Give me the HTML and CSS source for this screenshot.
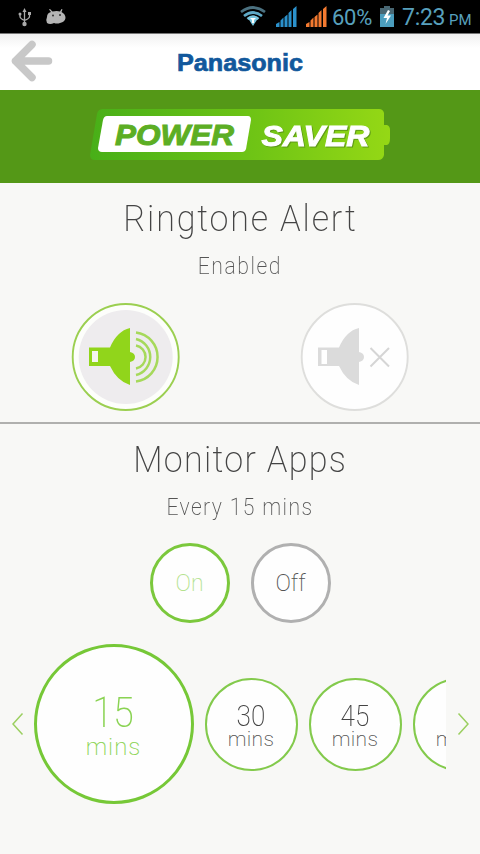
FILE: index.html
```html
<!DOCTYPE html>
<html lang="en">
<head>
<meta charset="utf-8">
<title>Power Saver</title>
<link rel="stylesheet" href="styles.css">
</head>
<body>
<div class="status">
  <svg class="notices" width="70" height="33" viewBox="0 0 70 33">
    <g fill="none" stroke="#aaa" stroke-width="1.3"><path d="M24.500 11V24M20 14V16.500Q20 18.500 24.500 20.500M29.500 13V16.500Q29.500 18.500 24.500 20.500"/></g>
    <g fill="#aaa"><path d="M24.500 8L26.500 12H22.500Z"/><circle cx="24.500" cy="24" r="2.200"/><circle cx="20" cy="14" r="1.500"/><rect x="28" y="12" width="3" height="3"/></g>
    <path d="M47 17Q47 13 51 12L49 9.500L50 9L52.500 11.500Q57 10.500 60 11.500L61.500 9L62.500 9.500L61.500 12Q65.500 14 65.500 18Q65 22 60 23Q57 24 54 23Q50 25 47 23Q45.500 20 47 17Z" fill="#b5b5b5"/>
    <circle cx="53" cy="15.500" r="1" fill="#333"/><circle cx="60" cy="15" r="1" fill="#333"/>
  </svg>
  <svg class="wifi" width="28" height="33" viewBox="0 0 28 33">
    <g fill="none" stroke-width="2.700"><path d="M1 12Q13 3 25 12" stroke="#4b7180"/><path d="M4 16Q13 9 22 16" stroke="#5fa9c6"/><path d="M7.500 19Q13 14.500 18.500 19" stroke="#79c6df"/></g>
    <path d="M8.500 19Q13 16 17.500 19L13 26Z" fill="#79c6df"/><path d="M10 18H16L14 20V23H12V20Z" fill="#fff"/>
  </svg>
  <svg class="signal" width="22" height="33" viewBox="0 0 22 33" fill="#2b91cc"><path d="M0 24L3.500 22V27H0ZM4.500 20.500L7.500 17.500V27H4.500ZM8.500 17L11.500 14.500V27H8.500ZM12.500 13L15.500 10V27H12.500ZM17 9L20.500 6V27H17Z"/></svg>
  <svg class="signal two" width="22" height="33" viewBox="0 0 22 33" fill="#f47a30"><path d="M0 24L3.500 22V27H0ZM4.500 20.500L7.500 17.500V27H4.500ZM8.500 17L11.500 14.500V27H8.500ZM12.500 13L15.500 10V27H12.500ZM17 9L20.500 6V27H17Z"/></svg>
  <span class="percent">60%</span>
  <svg class="battery" width="14" height="33" viewBox="0 0 14 33"><path d="M0 8H4V6H10V8H14V16H0Z" fill="#486773"/><path d="M0 14H14V27H0Z" fill="#4b9dbd"/><path d="M8 10L3.500 18H7L5.500 24L11 15.500H7.500L10 11Z" fill="#fff"/></svg>
  <span class="clock">7:23</span><span class="ampm">PM</span>
</div>
<header class="top">
  <svg class="back" width="56" height="56" viewBox="0 0 56 56"><path d="M32 10.500L15.500 27L32 43.500M15.500 27H48.500" fill="none"/></svg>
  <svg class="brand" width="130" height="36" viewBox="0 0 130 36"><text x="2" y="27.500" textLength="126" lengthAdjust="spacingAndGlyphs">Panasonic</text></svg>
</header>
<div class="banner">
  <svg width="304" height="56" viewBox="0 0 304 56">
    <defs><linearGradient id="cell"><stop offset="0" stop-color="#48af18"/><stop offset=".5" stop-color="#6bc215"/><stop offset="1" stop-color="#95d815"/></linearGradient></defs>
    <path d="M13 2H289Q293 2 294 6V18H297Q300 19 300 23V31Q300 37 297 38H294V48Q293 53 288 53H5Q0 53 0 48L7 7Q8 2 13 2Z" fill="url(#cell)"/>
    <path d="M17 9H158Q161 9 161 13L156 42Q155 45 152 45H12Q8 45 8 41L13 13Q14 9 17 9Z" fill="#fff"/>
    <text class="word power" x="25" y="37.500" textLength="119" lengthAdjust="spacingAndGlyphs">POWER</text>
    <text class="word saver" x="171.500" y="38.500" textLength="108" lengthAdjust="spacingAndGlyphs">SAVER</text>
  </svg>
</div>
<section class="panel ringtone">
  <h1 class="title t1">Ringtone Alert</h1>
  <p class="state s1">Enabled</p>
  <div class="sounds">
    <svg width="110" height="110" viewBox="0 0 110 110">
      <circle cx="54.700" cy="55" r="53" fill="#fdfefb" stroke="#9bcf50" stroke-width="1.900"/>
      <circle cx="54.700" cy="55" r="47" fill="#eeecee"/>
      <path d="M18 45.500H39Q46 29 59 26V50Q64 51 64 55Q64 59 59 60V83Q46 79 39 64H18Z" fill="#91d51b"/><rect x="21" y="49" width="6" height="11" fill="#f4f5ee"/>
      <g fill="none" stroke="#a6d95b" stroke-width="2.500"><path d="M65 43.500A11.700 11.700 0 0 1 65 66.500"/><path d="M65 37A18.500 18.500 0 0 1 65 73"/><path d="M65 30.500A24.700 24.700 0 0 1 65 79.500"/></g>
    </svg>
    <svg width="110" height="110" viewBox="0 0 110 110">
      <circle cx="54.700" cy="55" r="53" fill="#fefefe" stroke="#dededc" stroke-width="1.900"/>
      <path d="M18 45.500H39Q46 29 59 26V50Q64 51 64 55Q64 59 59 60V83Q46 79 39 64H18Z" fill="#dbdbdb"/><rect x="21.500" y="48" width="5.500" height="14" fill="#fff"/>
      <path d="M70.500 46L89 64.500M89 46L70.500 64.500" stroke="#d5d5d5" stroke-width="2"/>
    </svg>
  </div>
</section>
<section class="panel monitor">
  <h1 class="title t2">Monitor Apps</h1>
  <p class="state s2">Every 15 mins</p>
  <div class="switches"><span class="round on">On</span><span class="round">Off</span></div>
  <div class="picker">
    <svg class="arrow" width="12" height="24" viewBox="0 0 12 24"><path d="M10.500 1.500L1 12L10.500 22.500"/></svg>
    <div class="strip">
      <div class="time chosen"><b>15</b><i>mins</i></div>
      <div class="time"><b>30</b><i>mins</i></div>
      <div class="time"><b>45</b><i>mins</i></div>
      <div class="time"><b>60</b><i>mins</i></div>
    </div>
    <svg class="arrow" width="12" height="24" viewBox="0 0 12 24"><path d="M1.500 1.500L11 12L1.500 22.500"/></svg>
  </div>
</section>
</body>
</html>
```
FILE: styles.css
```css
* { box-sizing: border-box; }
body { margin: 0; width: 480px; height: 854px; overflow: hidden; background: #f8f8f6; font-family: Roboto, "Liberation Sans", sans-serif; font-weight: 200; color: #444; }
svg { display: block; flex: none; }
.status { display: flex; height: 34px; background: #000; border-bottom: 1px solid #777; color: #58a0bd; line-height: 36px; white-space: nowrap; font-weight: 400; }
.wifi { margin-left: 170px; }
.signal { margin-left: 8px; }
.two { margin-left: 8px; }
.percent { width: 41px; margin-left: 4px; font-size: 22px; letter-spacing: -.3px; }
.battery { margin-left: 7px; }
.clock { width: 43px; margin-left: 8px; font-size: 23px; letter-spacing: -.3px; }
.ampm { margin-left: 4px; font-size: 15px; line-height: 40px; }
.top { display: flex; height: 56px; background: linear-gradient(#f1f1f1, #fff 14px); }
.back path { stroke: #c8c8c8; stroke-width: 7.500; stroke-linecap: round; stroke-linejoin: round; }
.brand { margin: 9px 0 0 119px; }
.brand text { font: bold 24px "Liberation Sans", sans-serif; fill: #11589c; stroke: #11589c; stroke-width: .7px; }
.banner { height: 93px; padding: 17px 0 0 90px; background: #549817; }
.word { font: italic bold 30px "Liberation Sans", sans-serif; stroke-width: 1px; }
.power { fill: #5cae24; stroke: #5cae24; }
.saver { fill: #fff; stroke: #fff; filter: drop-shadow(1px 1px 0 #5e9a16); }
.panel { display: flex; flex-direction: column; align-items: center; padding-top: 14px; }
.ringtone { height: 241px; border-bottom: 2px solid #b0b0ae; }
.title { margin: 0; font-size: 37px; line-height: 44px; font-weight: 200; white-space: nowrap; transform: scaleX(.92); letter-spacing: 2px; }
.t2 { letter-spacing: 1.400px; }
.state { margin: 13px 0 0; font-size: 23px; line-height: 26px; color: #555; transform: scaleX(.92); letter-spacing: 1.7px; }
.s2 { letter-spacing: 1.500px; }
.sounds { display: flex; gap: 119.500px; margin: 22px 0 0 1px; }
.switches { display: flex; gap: 21px; margin-top: 22px; }
.round { width: 80px; height: 80px; border: 3px solid #b0b0b0; border-radius: 50%; background: #fefefe; font-size: 23px; line-height: 75px; text-align: center; color: #555; }
.on { border-color: #7bc83c; color: #b4e28f; }
.picker { display: flex; align-items: center; width: 457px; margin-top: 21px; gap: 10px; }
.strip { display: flex; align-items: center; gap: 11px; flex: 1; overflow: hidden; margin-right: 1px; }
.time { display: flex; flex: none; flex-direction: column; align-items: center; width: 93px; height: 93px; padding-top: 21px; border: 2px solid #83ca4c; border-radius: 50%; background: #fefefe; }
.time b { font-size: 29px; line-height: 30px; font-weight: 200; transform: scaleX(.9); }
.time i { font-size: 21px; line-height: 18px; margin-top: -1px; font-style: normal; color: #555; letter-spacing: .3px; }
.chosen { width: 160px; height: 160px; padding-top: 43px; border-width: 3px; border-color: #76c837; }
.chosen b { font-size: 42px; line-height: 46px; color: #8ad353; }
.chosen i { font-size: 24px; line-height: 24px; color: #8ad353; letter-spacing: 1px; }
.arrow path { fill: none; stroke: #9bcf60; stroke-width: 1.500; }
```
